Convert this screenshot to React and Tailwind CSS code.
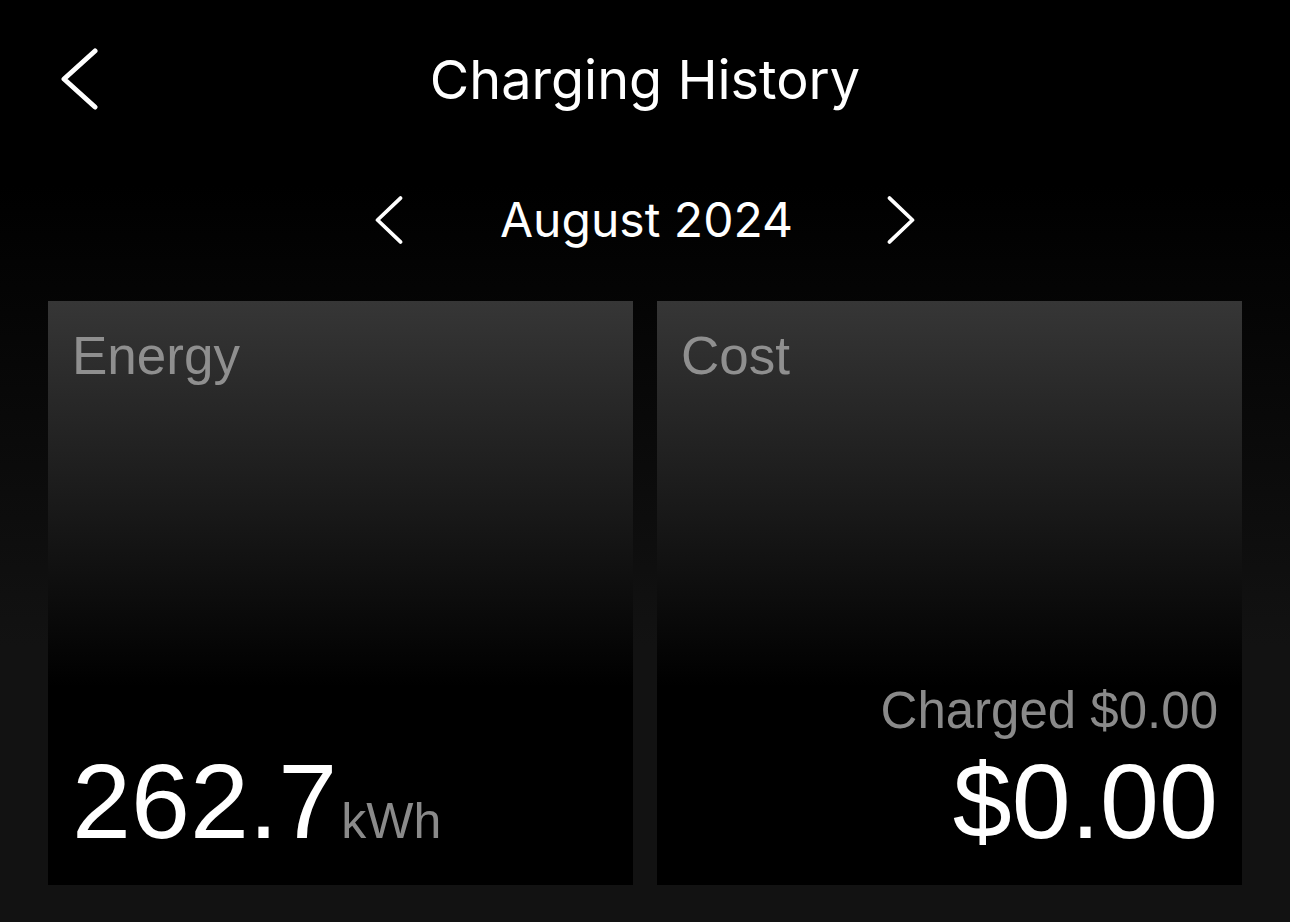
import { useState } from "react";

function Chevron({ dir = "left", className = "", stroke = 4 }) {
  return (
    <svg viewBox="0 0 26 46" className={className} fill="none" stroke="white" strokeWidth={stroke} strokeLinecap="round" strokeLinejoin="round">
      {dir === "left" ? <path d="M24 2 L2 23 L24 44" /> : <path d="M2 2 L24 23 L2 44" />}
    </svg>
  );
}

function StatCard({ label, children }) {
  return (
    <div className="flex-1 h-[584px] bg-linear-to-b/srgb from-[#363636] to-black to-[66%] px-6 pt-[28px] pb-[31px] flex flex-col justify-between">
      <div className="text-[53px] leading-none text-[#8f8f8f]">{label}</div>
      {children}
    </div>
  );
}

export default function App() {
  const [month] = useState("August 2024");

  return (
    <div className="w-full min-h-[922px] bg-linear-to-b/srgb from-black from-[20%] to-[#121212] to-[70%] text-white font-['Liberation_Sans',Arial,sans-serif]">
      {/* header */}
      <div className="relative h-[160px] flex items-center justify-center">
        <button className="absolute left-[60px] top-[48px] w-[39px] h-[62px]">
          <svg viewBox="0 0 39 62" className="w-[39px] h-[62px]" fill="none" stroke="white" strokeWidth="5" strokeLinecap="round" strokeLinejoin="round">
            <path d="M35 3 L4 31 L35 59" />
          </svg>
        </button>
        <h1 className="font-['Inter',sans-serif] text-[54px] font-normal -mt-[2px]">Charging History</h1>
      </div>

      {/* month switcher */}
      <div className="flex items-center justify-center gap-[97px] h-[120px]">
        <Chevron dir="left" className="w-[28px] h-[48px] shrink-0" stroke={3.6} />
        <div className="font-['Inter',sans-serif] text-[48px] leading-none w-[290px] text-center whitespace-nowrap">{month}</div>
        <Chevron dir="right" className="w-[28px] h-[48px] shrink-0" stroke={3.6} />
      </div>

      {/* cards */}
      <div className="flex gap-6 px-12 pt-[21px]">
        <StatCard label="Energy">
          <div className="flex items-baseline leading-none">
            <span className="text-[106px] leading-none text-white">262.7</span>
            <span className="text-[50px] leading-none text-[#8a8a8a] ml-[4px]">kWh</span>
          </div>
        </StatCard>
        <StatCard label="Cost">
          <div className="flex flex-col items-end">
            <span className="text-[51px] leading-none text-[#8a8a8a]">Charged $0.00</span>
            <span className="text-[106px] leading-none text-white mt-[12px]">$0.00</span>
          </div>
        </StatCard>
      </div>
    </div>
  );
}
